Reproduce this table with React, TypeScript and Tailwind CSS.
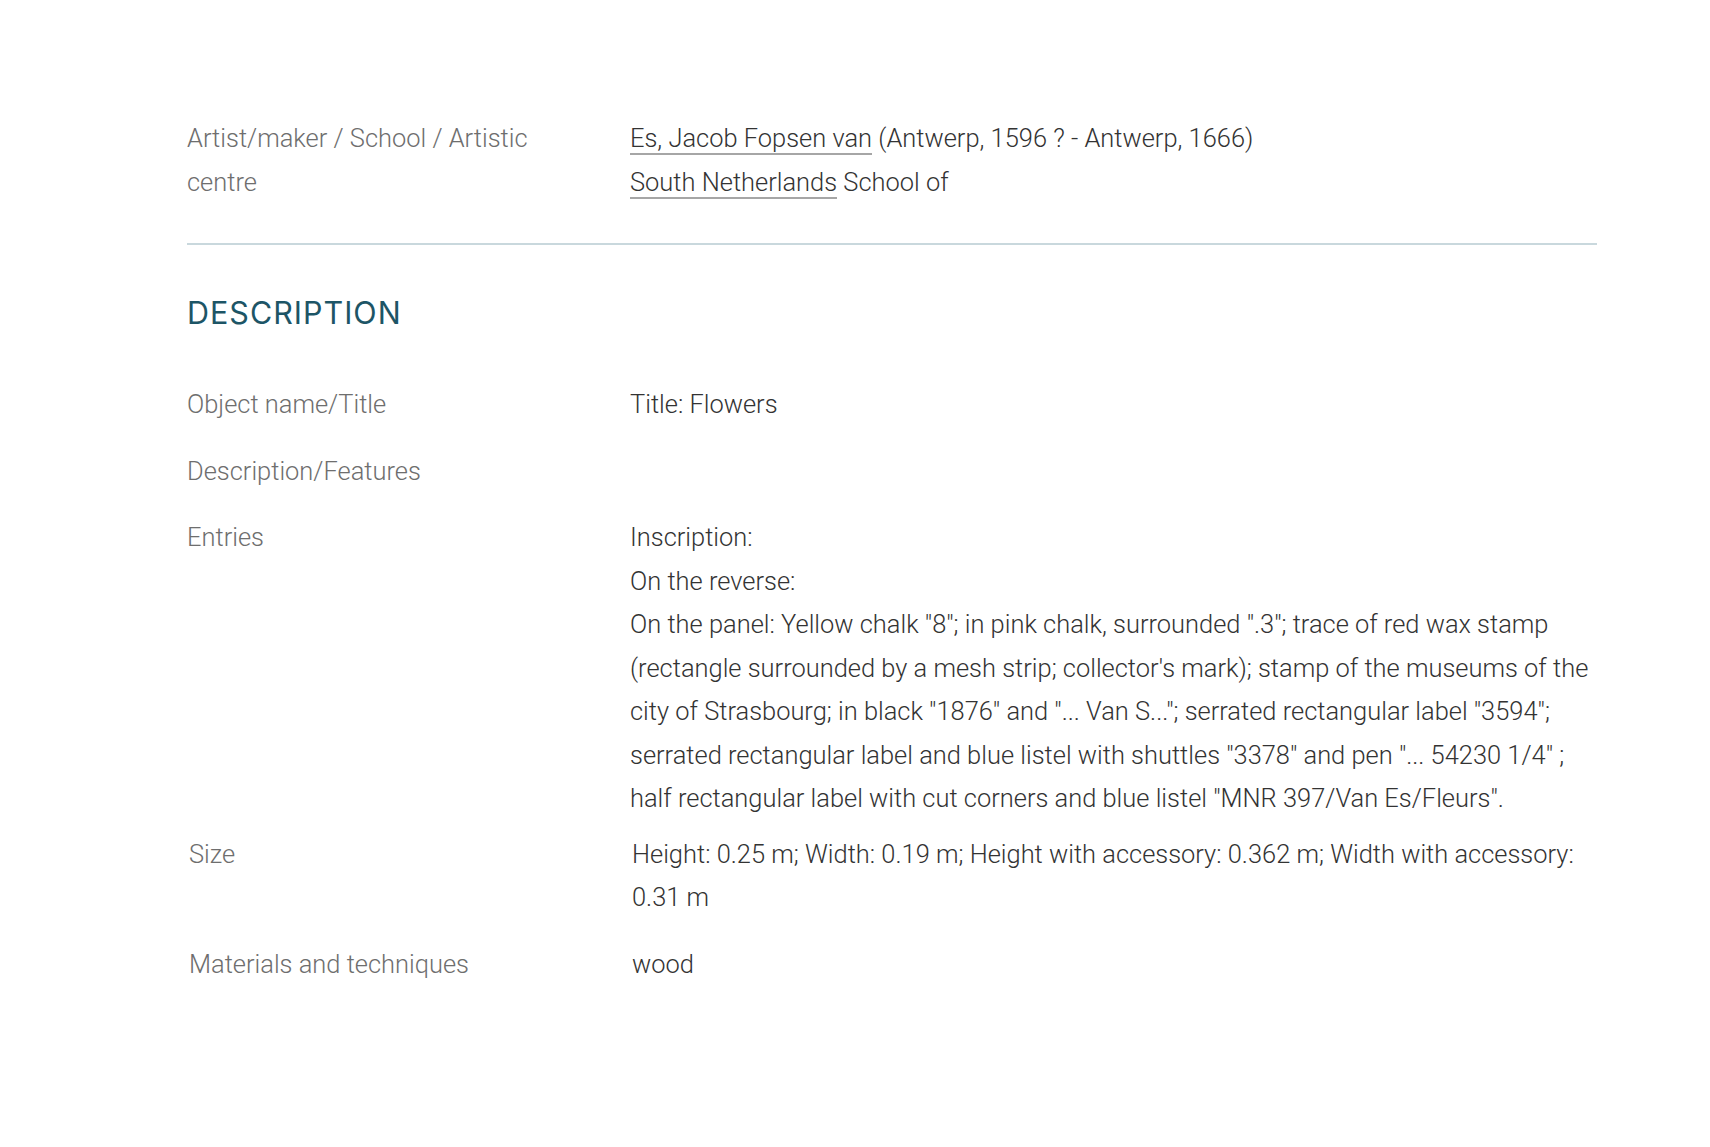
import React from 'react'

type Row = {
  label: string
  lines: React.ReactNode[]
  className?: string
}

const rows: Row[] = [
  { label: 'Object name/Title', lines: ['Title: Flowers'], className: 'mb-[23px]' },
  { label: 'Description/Features', lines: [''], className: 'mb-[23px]' },
  {
    label: 'Entries',
    lines: [
      'Inscription:',
      'On the reverse:',
      'On the panel: Yellow chalk "8"; in pink chalk, surrounded ".3"; trace of red wax stamp (rectangle surrounded by a mesh strip; collector\'s mark); stamp of the museums of the city of Strasbourg; in black "1876" and "... Van S..."; serrated rectangular label "3594"; serrated rectangular label and blue listel with shuttles "3378" and pen "... 54230 1/4" ; half rectangular label with cut corners and blue listel "MNR 397/Van Es/Fleurs".',
    ],
    className: 'mb-[12px]',
  },
  {
    label: 'Size',
    lines: ['Height: 0.25 m; Width: 0.19 m; Height with accessory: 0.362 m; Width with accessory: 0.31\u00a0m'],
    className: 'mb-[23px] pl-[2px]',
  },
  { label: 'Materials and techniques', lines: ['wood'], className: 'pl-[2px]' },
]

function Link({ children }: { children: React.ReactNode }) {
  return <span className="border-b-2 border-[#a6a6a6]">{children}</span>
}

function FieldRow({ label, lines, className }: Row) {
  return (
    <div className={`flex ${className ?? ''}`}>
      <div className="w-[443px] shrink-0 pr-10 text-[#6e6e6e]">{label}</div>
      <div className="flex-1 text-[#333333]">
        {lines.map((line, i) => (
          <p key={i} className="min-h-[43.5px]">
            {line}
          </p>
        ))}
      </div>
    </div>
  )
}

export default function App() {
  return (
    <div
      className="min-h-[1147px] bg-white pt-[117px] pl-[187px] pr-[113px] text-[25.45px] leading-[43.5px] font-light"
      style={{ fontFamily: '"Roboto Light", Roboto, "Liberation Sans", sans-serif' }}
    >
      {/* Artist block */}
      <div className="flex">
        <div className="w-[443px] shrink-0 pr-14 text-[#6e6e6e]">Artist/maker / School / Artistic centre</div>
        <div className="flex-1 text-[#333333]">
          <p>
            <Link>Es, Jacob Fopsen van</Link> (Antwerp, 1596 ? - Antwerp, 1666)
          </p>
          <p>
            <Link>South Netherlands</Link> School of
          </p>
        </div>
      </div>

      <div className="mt-[39px] h-[2px] bg-[#c9d8dd]" />

      <h2
        className="mt-[50px] mb-[52px] text-[30.5px] leading-[36px] font-normal text-[#1d5566] tracking-[1px]"
        style={{ fontFamily: 'Inter, "Noto Sans", sans-serif' }}
      >
        DESCRIPTION
      </h2>

      {rows.map((r) => (
        <FieldRow key={r.label} {...r} />
      ))}
    </div>
  )
}
